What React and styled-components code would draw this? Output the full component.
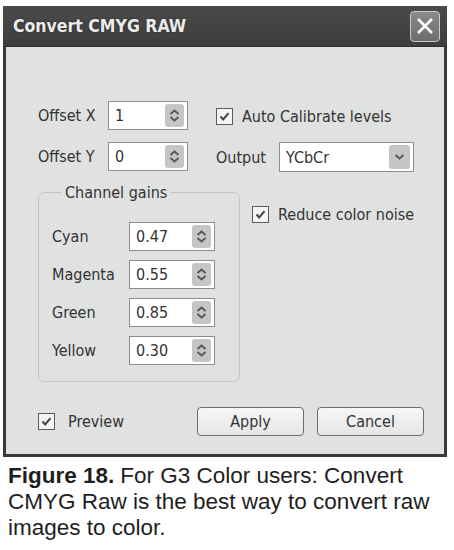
import React from "react";
import styled, { createGlobalStyle } from "styled-components";

const GlobalStyle = createGlobalStyle`
  html, body {
    margin: 0;
    padding: 0;
    background: #ffffff;
  }
  body {
    width: 454px;
    height: 550px;
    overflow: hidden;
  }
`;

const Page = styled.div`
  padding: 6px 7px 0 3px;
`;

const Window = styled.div`
  width: 444px;
  height: 451px;
  box-sizing: border-box;
  border: 3px solid #3a3a3a;
  border-top: 0;
  background: #e0e1e1;
  display: flex;
  flex-direction: column;
`;

const TitleBar = styled.div`
  height: 40px;
  margin: 0 -3px;
  background: linear-gradient(#4a4a4a, #3e3e3e);
  border-bottom: 1px solid #2e2e2e;
  display: flex;
  align-items: center;
  justify-content: space-between;
  padding: 0 7px 0 10px;
`;

const Title = styled.div`
  font-family: "DejaVu Sans", sans-serif;
  font-stretch: condensed;
  font-weight: bold;
  font-size: 17.5px;
  color: #ececec;
  text-shadow: 0 0 2px #222;
`;

const CloseButton = styled.div`
  width: 30px;
  height: 31px;
  box-sizing: border-box;
  border: 1.5px solid #c9c9c9;
  border-radius: 4px;
  background: linear-gradient(#8a8a8a, #6c6c6c);
  display: flex;
  align-items: center;
  justify-content: center;
`;

const Body = styled.div`
  flex: 1;
  padding: 52px 0 0 32px;
  display: flex;
  flex-direction: column;
  font-family: "DejaVu Sans", sans-serif;
  font-stretch: condensed;
  font-size: 16px;
  color: #333;
`;

const TopRow = styled.div`
  display: flex;
  gap: 28px;
`;

const OffsetGrid = styled.div`
  display: grid;
  grid-template-columns: 70px 80px;
  row-gap: 9px;
  align-items: center;
`;

const RightColumn = styled.div`
  display: flex;
  flex-direction: column;
  gap: 16px;
  padding-top: 8px;
`;

const Label = styled.span`
  white-space: nowrap;
`;

const CheckRow = styled.label`
  display: flex;
  align-items: center;
  gap: 9px;
  white-space: nowrap;
`;

const Box = styled.span`
  width: 17px;
  height: 17px;
  box-sizing: border-box;
  border: 1px solid #5a5a5a;
  background: #f4f4f4;
  display: flex;
  align-items: center;
  justify-content: center;
`;

const Field = styled.div`
  width: ${(p) => p.$w}px;
  height: ${(p) => p.$h || 29}px;
  box-sizing: border-box;
  border: 1px solid #8d8d8d;
  background: #fff;
  display: flex;
  align-items: center;
  justify-content: space-between;
  padding: 2px 3px 2px 6px;
`;

const SpinButton = styled.div`
  width: 19px;
  align-self: stretch;
  border-radius: 3px;
  background: #c4c5c5;
  display: flex;
  flex-direction: column;
  align-items: center;
  justify-content: center;
  gap: 1px;
`;

const DropButton = styled(SpinButton)`
  width: 21px;
`;

const OutputRow = styled.div`
  display: flex;
  align-items: center;
  gap: 13px;
`;

const MiddleRow = styled.div`
  display: flex;
  gap: 12px;
  margin-top: 11px;
`;

const GroupBox = styled.fieldset`
  width: 202px;
  height: 199px;
  box-sizing: border-box;
  margin: 0;
  border: 1px solid #c4c5c5;
  border-radius: 6px;
  padding: 20px 0 0 13px;
  display: grid;
  grid-template-columns: 77px 86px;
  grid-auto-rows: 29px;
  row-gap: 9px;
  align-items: center;
  align-content: start;
`;

const Legend = styled.legend`
  padding: 0 3px;
  margin-left: 10px;
  font-size: 16px;
`;

const SideCheck = styled.div`
  padding-top: 22px;
`;

const Footer = styled.div`
  display: flex;
  align-items: center;
  margin-top: 25px;
`;

const PreviewCheck = styled(CheckRow)`
  gap: 13px;
  width: 159px;
`;

const Button = styled.div`
  width: 107px;
  height: 29px;
  box-sizing: border-box;
  border: 1px solid #6e6e6e;
  border-radius: 4px;
  background: linear-gradient(#f6f6f6, #e6e6e6);
  display: flex;
  align-items: center;
  justify-content: center;
  margin-right: 13px;
`;

const Caption = styled.p`
  margin: 6px 0 0 5px;
  width: 440px;
  font-family: "Liberation Sans", Arial, sans-serif;
  font-size: 22.5px;
  line-height: 26px;
  color: #1e1e1e;
`;

const Strong = styled.strong`
  font-weight: 900;
  margin-right: 6px;
`;

const Check = () => (
  <svg width="13" height="13" viewBox="0 0 13 13">
    <path d="M2.5 6.5 L5.2 9.4 L10.5 3.2" fill="none" stroke="#444" strokeWidth="2" />
  </svg>
);

const Chevron = ({ up }) => (
  <svg width="11" height="6" viewBox="0 0 11 6">
    <path
      d={up ? "M1.5 5 L5.5 1.5 L9.5 5" : "M1.5 1 L5.5 4.5 L9.5 1"}
      fill="none"
      stroke="#555"
      strokeWidth="1.8"
    />
  </svg>
);

const Spinner = ({ value, w }) => (
  <Field $w={w}>
    <span>{value}</span>
    <SpinButton>
      <Chevron up />
      <Chevron />
    </SpinButton>
  </Field>
);

const CheckBox = ({ label, as }) => {
  const Row = as || CheckRow;
  return (
    <Row>
      <Box>
        <Check />
      </Box>
      {label}
    </Row>
  );
};

const gains = [
  ["Cyan", "0.47"],
  ["Magenta", "0.55"],
  ["Green", "0.85"],
  ["Yellow", "0.30"],
];

export default function App() {
  return (
    <>
      <GlobalStyle />
      <Page>
        <Window>
          <TitleBar>
            <Title>Convert CMYG RAW</Title>
            <CloseButton>
              <svg width="18" height="18" viewBox="0 0 18 18">
                <path d="M2 2 L16 16 M16 2 L2 16" stroke="#fff" strokeWidth="2.6" />
              </svg>
            </CloseButton>
          </TitleBar>
          <Body>
            <TopRow>
              <OffsetGrid>
                <Label>Offset X</Label>
                <Spinner value="1" w={80} />
                <Label>Offset Y</Label>
                <Spinner value="0" w={80} />
              </OffsetGrid>
              <RightColumn>
                <CheckBox label="Auto Calibrate levels" />
                <OutputRow>
                  <Label>Output</Label>
                  <Field $w={135} $h={30}>
                    <span>YCbCr</span>
                    <DropButton>
                      <Chevron />
                    </DropButton>
                  </Field>
                </OutputRow>
              </RightColumn>
            </TopRow>
            <MiddleRow>
              <GroupBox>
                <Legend>Channel gains</Legend>
                {gains.map(([name, value]) => (
                  <React.Fragment key={name}>
                    <Label>{name}</Label>
                    <Spinner value={value} w={86} />
                  </React.Fragment>
                ))}
              </GroupBox>
              <SideCheck>
                <CheckBox label="Reduce color noise" />
              </SideCheck>
            </MiddleRow>
            <Footer>
              <CheckBox label="Preview" as={PreviewCheck} />
              <Button>Apply</Button>
              <Button>Cancel</Button>
            </Footer>
          </Body>
        </Window>
        <Caption>
          <Strong>Figure 18.</Strong>For G3 Color users: Convert CMYG Raw is the
          best way to convert raw images to color.
        </Caption>
      </Page>
    </>
  );
}
